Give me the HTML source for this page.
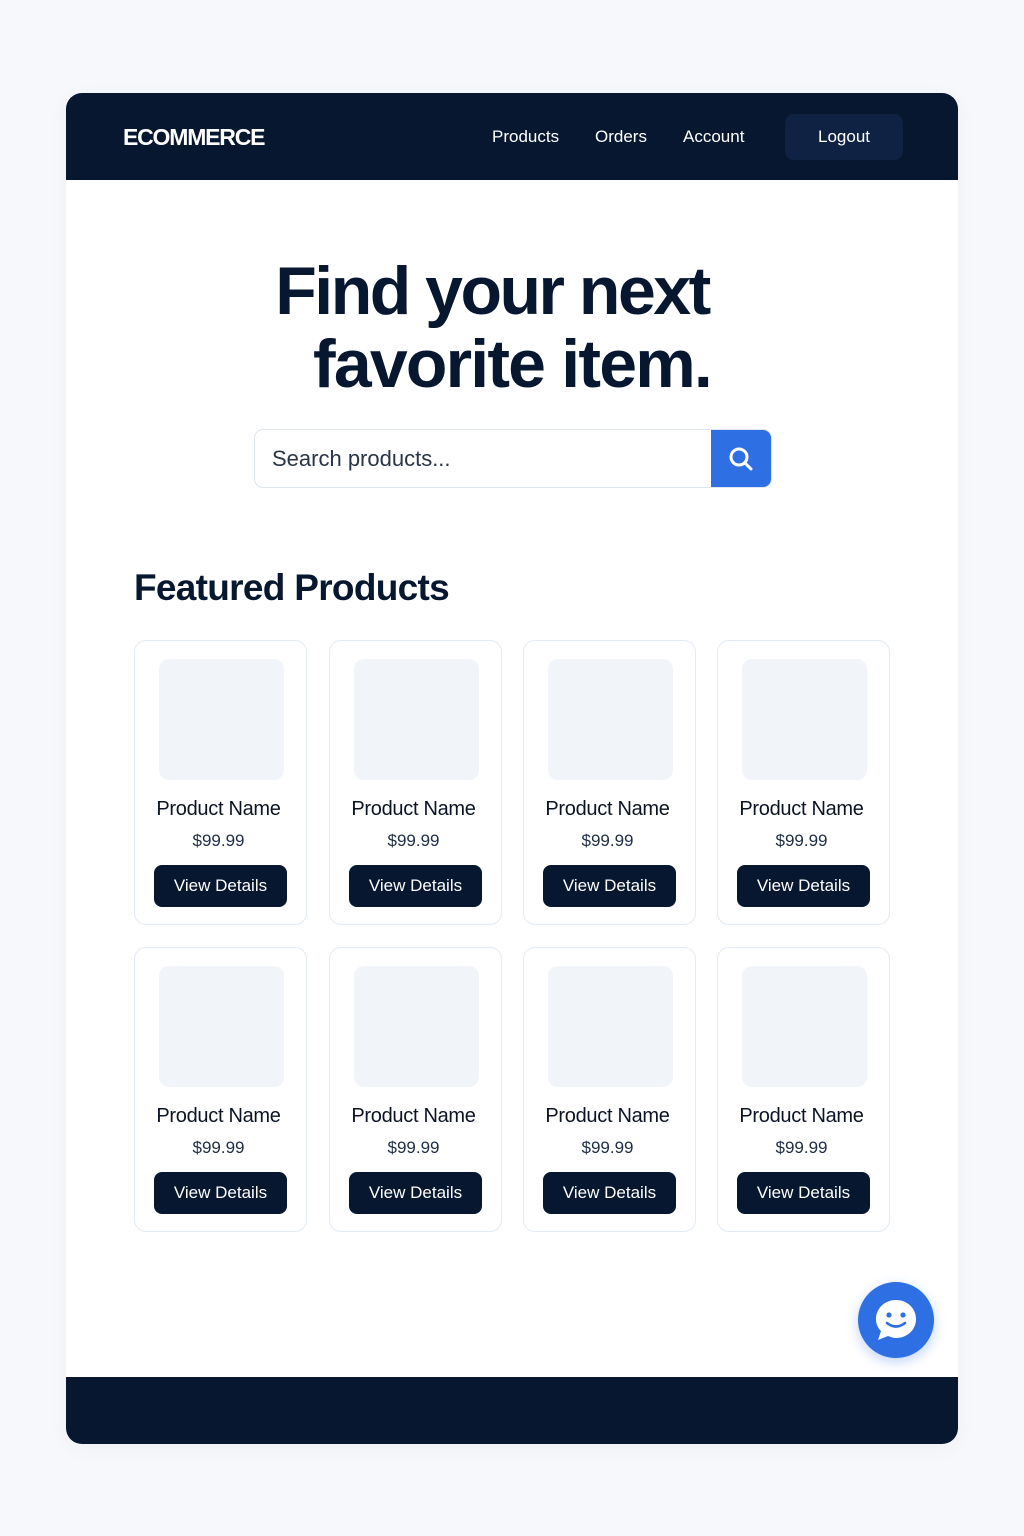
<!DOCTYPE html>
<html><head><meta charset="utf-8"><style>
*{margin:0;padding:0;box-sizing:border-box}
body{width:1024px;height:1536px;background:#f6f8fb;font-family:"Liberation Sans",sans-serif;position:relative;overflow:hidden}
.wrap{position:absolute;left:66px;top:93px;width:892px;height:1351px;background:#fff;border-radius:16px;overflow:hidden;box-shadow:0 4px 20px rgba(0,0,0,.04)}
.hdr{position:absolute;left:0;top:0;width:892px;height:87px;background:#07172f}
.logo{position:absolute;left:57px;top:31px;color:#fff;font-weight:bold;font-size:23px;letter-spacing:-1.2px}
.nav{position:absolute;top:34px;color:#fff;font-size:17px}
.logout{position:absolute;left:719px;top:21px;width:118px;height:46px;background:#102243;border-radius:9px;color:#fff;font-size:17px;text-align:center;line-height:46px}
.h1{position:absolute;width:892px;text-align:center;font-size:68px;line-height:73px;color:#07172f;font-weight:bold}
.search{position:absolute;left:188px;top:336px;width:518px;height:59px;border:1px solid #dfe5ee;border-radius:9px;overflow:hidden}
.search span{position:absolute;left:17px;top:16px;font-size:22px;color:#2a3447}
.sbtn{position:absolute;right:0;top:0;width:60px;height:59px;background:#2f6fe4}
h2{position:absolute;left:68px;top:474px;font-size:37px;color:#07172f;letter-spacing:-.7px}
.card{position:absolute;width:173px;height:285px;border:1px solid #e3ebf5;border-radius:12px;background:#fff}
.img{position:absolute;left:24px;top:18px;width:125px;height:121px;background:#f1f4f8;border-radius:10px}
.nm{position:absolute;left:-2px;width:100%;top:157px;text-align:center;font-size:20px;color:#0c1424;letter-spacing:-.3px}
.pr{position:absolute;left:-2px;width:100%;top:190px;text-align:center;font-size:17px;color:#1f2d45}
.vb{position:absolute;left:19px;top:224px;width:133px;height:42px;background:#07172f;border-radius:8px;color:#fff;font-size:17px;text-align:center;line-height:42px}
.ftr{position:absolute;left:0;top:1284px;width:892px;height:67px;background:#07172f}
.chat{position:absolute;left:792px;top:1189px;width:76px;height:76px;border-radius:50%;background:#2f6fe4;box-shadow:0 4px 12px rgba(47,111,228,.3)}
</style></head><body>
<div class="wrap">
<div class="hdr">
<div class="logo">ECOMMERCE</div>
<div class="nav" style="left:426px">Products</div>
<div class="nav" style="left:529px">Orders</div>
<div class="nav" style="left:617px">Account</div>
<div class="logout">Logout</div>
</div>
<div class="h1" style="left:-20px;top:162px;letter-spacing:-2.5px">Find your next</div>
<div class="h1" style="left:0px;top:235px;letter-spacing:-1.8px">favorite item.</div>
<div class="search"><span>Search products...</span><div class="sbtn"><svg width="60" height="59" viewBox="0 0 60 59"><circle cx="28" cy="27" r="8" fill="none" stroke="#fff" stroke-width="3"/><path d="M34 33l6 6" stroke="#fff" stroke-width="3" stroke-linecap="round"/></svg></div></div>
<h2>Featured Products</h2>
<div class="card" style="left:68px;top:547px"><div class="img"></div><div class="nm">Product Name</div><div class="pr">$99.99</div><div class="vb">View Details</div></div>
<div class="card" style="left:263px;top:547px"><div class="img"></div><div class="nm">Product Name</div><div class="pr">$99.99</div><div class="vb">View Details</div></div>
<div class="card" style="left:457px;top:547px"><div class="img"></div><div class="nm">Product Name</div><div class="pr">$99.99</div><div class="vb">View Details</div></div>
<div class="card" style="left:651px;top:547px"><div class="img"></div><div class="nm">Product Name</div><div class="pr">$99.99</div><div class="vb">View Details</div></div>
<div class="card" style="left:68px;top:854px"><div class="img"></div><div class="nm">Product Name</div><div class="pr">$99.99</div><div class="vb">View Details</div></div>
<div class="card" style="left:263px;top:854px"><div class="img"></div><div class="nm">Product Name</div><div class="pr">$99.99</div><div class="vb">View Details</div></div>
<div class="card" style="left:457px;top:854px"><div class="img"></div><div class="nm">Product Name</div><div class="pr">$99.99</div><div class="vb">View Details</div></div>
<div class="card" style="left:651px;top:854px"><div class="img"></div><div class="nm">Product Name</div><div class="pr">$99.99</div><div class="vb">View Details</div></div>
<div class="chat"><svg width="76" height="76" viewBox="0 0 76 76"><path d="M38 18c-11 0-20 8-20 19 0 5 2 9 5 12l-3 9 10-4c3 1 5 2 8 2 11 0 20-8 20-19S49 18 38 18z" fill="#fff"/><circle cx="31" cy="33" r="2.6" fill="#2f6fe4"/><circle cx="45" cy="33" r="2.6" fill="#2f6fe4"/><path d="M29 41q9 7 18 0" fill="none" stroke="#2f6fe4" stroke-width="2.6" stroke-linecap="round"/></svg></div>
<div class="ftr"></div>
</div>
</body></html>
